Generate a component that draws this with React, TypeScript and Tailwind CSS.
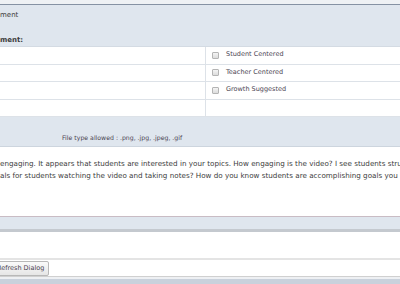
const checks = ['Student Centered', 'Teacher Centered', 'Growth Suggested', '']

export default function App() {
  return (
    <div className="w-[400px] h-[284px] overflow-hidden bg-white flex flex-col text-[#3c3c3c] text-[7px] font-['DejaVu_Sans',Verdana,sans-serif]">
      {/* top strip */}
      <div className="h-[5px] bg-[#eef1f4] border-b border-[#8592a3] shrink-0" />

      {/* header */}
      <div className="h-[41px] bg-[#dfe6ee] flex flex-col justify-between pt-[5px] pb-[1px] shrink-0">
        <div>ment</div>
        <div className="font-bold">ment:</div>
      </div>

      {/* criteria table */}
      <div className="border-t border-[#d4dbe3] shrink-0">
        {checks.map((label, i) => (
          <div key={i} className="h-[17.5px] flex border-b border-[#dde2e8]">
            <div className="w-[206px] border-r border-[#dde2e8]" />
            <div className="flex items-center gap-[7px] pl-[6px]">
              {label && <span className="w-[7px] h-[7px] border border-[#b4b4b4] rounded-[1px] bg-gradient-to-b from-[#f4f4f4] to-[#dcdcdc]" />}
              <span className="text-[#4a4452] text-[6.5px]">{label}</span>
            </div>
          </div>
        ))}
      </div>

      {/* upload section */}
      <div className="h-[30px] bg-[#dfe6ee] flex items-end pb-[4px] pl-[62px] border-b border-[#cdd5de] shrink-0">
        <span className="text-[#4a4452] text-[6.2px]">File type allowed : .png, .jpg, .jpeg, .gif</span>
      </div>

      {/* comment text */}
      <div className="h-[70px] pt-[11px] leading-[12px] text-[7.2px] whitespace-nowrap border-b border-[#c9bcc4] shrink-0">
        <div>engaging. It appears that students are interested in your topics. How engaging is the video? I see students stru</div>
        <div>als for students watching the video and taking notes? How do you know students are accomplishing goals you h</div>
      </div>

      <div className="h-[15px] bg-[#dfe6ee] border-b-[3px] border-[#c4c9cf] shrink-0" />

      <div className="h-[28px] border-b-2 border-[#e4e4e4] shrink-0" />

      {/* buttons */}
      <div className="h-[17px] flex items-center border-b border-[#d0d0d0] shrink-0">
        <button className="h-[15px] px-[4px] -ml-[8px] border border-[#b8b8b8] rounded-[2px] bg-gradient-to-b from-[#fafafa] to-[#e6e6e6] text-[#4a4452] text-[6.5px] leading-none">
          Refresh Dialog
        </button>
      </div>

      <div className="flex-1 bg-[#c9d1dc] border-t-2 border-[#eef0f3]" />
    </div>
  )
}
